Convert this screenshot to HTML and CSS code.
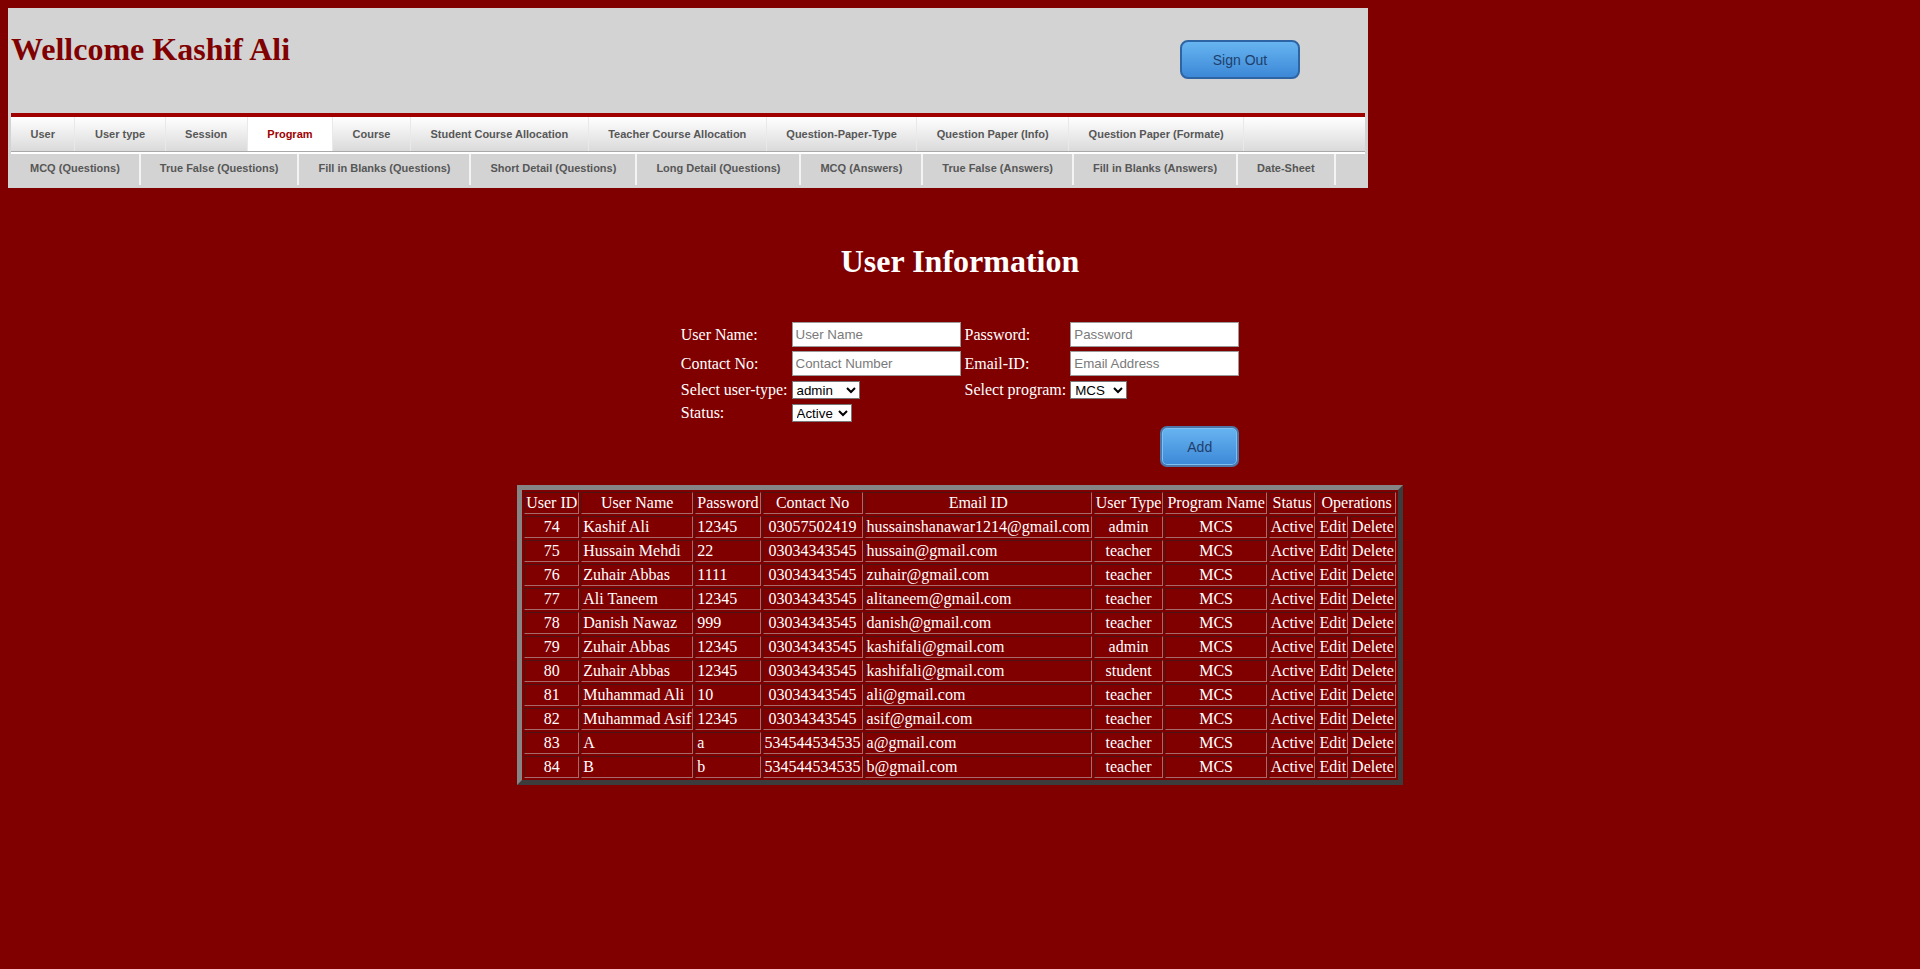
FILE: index.html
```html
<!DOCTYPE html>
<html>
<head>
<meta charset="utf-8">
<title>User Information</title>
<link rel="stylesheet" href="styles.css">
</head>
<body>
<div class="panel">
  <div class="top">
    <h1 class="welcome">Wellcome Kashif Ali</h1>
    <button class="btn signout">Sign Out</button>
  </div>
  <nav class="menu">
    <ul class="row1">
      <li>User</li>
      <li>User type</li>
      <li>Session</li>
      <li class="active">Program</li>
      <li>Course</li>
      <li>Student Course Allocation</li>
      <li>Teacher Course Allocation</li>
      <li>Question-Paper-Type</li>
      <li>Question Paper (Info)</li>
      <li>Question Paper (Formate)</li>
    </ul>
    <ul class="row2">
      <li>MCQ (Questions)</li>
      <li>True False (Questions)</li>
      <li>Fill in Blanks (Questions)</li>
      <li>Short Detail (Questions)</li>
      <li>Long Detail (Questions)</li>
      <li>MCQ (Answers)</li>
      <li>True False (Answers)</li>
      <li>Fill in Blanks (Answers)</li>
      <li>Date-Sheet</li>
    </ul>
  </nav>
</div>

<main class="content">
  <h1 class="title">User Information</h1>
  <table class="form">
    <tr>
      <td>User Name:</td>
      <td><input class="field" type="text" placeholder="User Name"></td>
      <td>Password:</td>
      <td><input class="field" type="text" placeholder="Password"></td>
    </tr>
    <tr>
      <td>Contact No:</td>
      <td><input class="field" type="text" placeholder="Contact Number"></td>
      <td>Email-ID:</td>
      <td><input class="field" type="text" placeholder="Email Address"></td>
    </tr>
    <tr>
      <td>Select user-type:</td>
      <td><select class="sel sel-type"><option>admin</option></select></td>
      <td>Select program:</td>
      <td><select class="sel sel-prog"><option>MCS</option></select></td>
    </tr>
    <tr>
      <td>Status:</td>
      <td><select class="sel sel-status"><option>Active</option></select></td>
      <td></td>
      <td></td>
    </tr>
    <tr>
      <td colspan="3"></td>
      <td><button class="btn add">Add</button></td>
    </tr>
  </table>

  <table class="data">
    <tr>
      <td class="c">User ID</td>
      <td class="c">User Name</td>
      <td class="c">Password</td>
      <td class="c">Contact No</td>
      <td class="c">Email ID</td>
      <td class="c">User Type</td>
      <td class="c">Program Name</td>
      <td class="c">Status</td>
      <td class="c" colspan="2">Operations</td>
    </tr>
    <tr><td class="c">74</td><td>Kashif Ali</td><td>12345</td><td class="c">03057502419</td><td>hussainshanawar1214@gmail.com</td><td class="c">admin</td><td class="c">MCS</td><td>Active</td><td>Edit</td><td>Delete</td></tr>
    <tr><td class="c">75</td><td>Hussain Mehdi</td><td>22</td><td class="c">03034343545</td><td>hussain@gmail.com</td><td class="c">teacher</td><td class="c">MCS</td><td>Active</td><td>Edit</td><td>Delete</td></tr>
    <tr><td class="c">76</td><td>Zuhair Abbas</td><td>1111</td><td class="c">03034343545</td><td>zuhair@gmail.com</td><td class="c">teacher</td><td class="c">MCS</td><td>Active</td><td>Edit</td><td>Delete</td></tr>
    <tr><td class="c">77</td><td>Ali Taneem</td><td>12345</td><td class="c">03034343545</td><td>alitaneem@gmail.com</td><td class="c">teacher</td><td class="c">MCS</td><td>Active</td><td>Edit</td><td>Delete</td></tr>
    <tr><td class="c">78</td><td>Danish Nawaz</td><td>999</td><td class="c">03034343545</td><td>danish@gmail.com</td><td class="c">teacher</td><td class="c">MCS</td><td>Active</td><td>Edit</td><td>Delete</td></tr>
    <tr><td class="c">79</td><td>Zuhair Abbas</td><td>12345</td><td class="c">03034343545</td><td>kashifali@gmail.com</td><td class="c">admin</td><td class="c">MCS</td><td>Active</td><td>Edit</td><td>Delete</td></tr>
    <tr><td class="c">80</td><td>Zuhair Abbas</td><td>12345</td><td class="c">03034343545</td><td>kashifali@gmail.com</td><td class="c">student</td><td class="c">MCS</td><td>Active</td><td>Edit</td><td>Delete</td></tr>
    <tr><td class="c">81</td><td>Muhammad Ali</td><td>10</td><td class="c">03034343545</td><td>ali@gmail.com</td><td class="c">teacher</td><td class="c">MCS</td><td>Active</td><td>Edit</td><td>Delete</td></tr>
    <tr><td class="c">82</td><td>Muhammad Asif</td><td>12345</td><td class="c">03034343545</td><td>asif@gmail.com</td><td class="c">teacher</td><td class="c">MCS</td><td>Active</td><td>Edit</td><td>Delete</td></tr>
    <tr><td class="c">83</td><td>A</td><td>a</td><td class="c">534544534535</td><td>a@gmail.com</td><td class="c">teacher</td><td class="c">MCS</td><td>Active</td><td>Edit</td><td>Delete</td></tr>
    <tr><td class="c">84</td><td>B</td><td>b</td><td class="c">534544534535</td><td>b@gmail.com</td><td class="c">teacher</td><td class="c">MCS</td><td>Active</td><td>Edit</td><td>Delete</td></tr>
  </table>
</main>
</body>
</html>
```

FILE: styles.css
```css
html, body {
  background: #800000;
}
body {
  margin: 8px;
  font-family: "Liberation Serif", "Times New Roman", serif;
  font-size: 16px;
  color: #ffffff;
}

/* ---------- header panel ---------- */
.panel {
  width: 1360px;
  box-sizing: border-box;
  padding: 3px;
  background: #d3d3d3;
}
.top {
  height: 102px;
  display: flex;
  justify-content: space-between;
  align-items: flex-start;
}
.welcome {
  margin: 20px 0 0 0;
  font-family: "Liberation Serif", "Times New Roman", serif;
  font-size: 32px;
  line-height: 37px;
  font-weight: bold;
  color: #800000;
}
.btn {
  font-family: "Liberation Sans", Arial, sans-serif;
  font-size: 14px;
  color: #1f406c;
  background: linear-gradient(#67b4f1, #3d88d7);
  border: 2px solid #2d64a4;
  border-radius: 8px;
  padding: 0;
  cursor: pointer;
}
.signout {
  width: 120px;
  height: 39px;
  margin: 29px 65px 0 0;
}

/* ---------- menu ---------- */
.menu ul {
  list-style: none;
  margin: 0;
  padding: 0;
  display: flex;
  font-family: "Liberation Sans", Arial, sans-serif;
  font-size: 11px;
  font-weight: bold;
  color: #575757;
}
.row1 {
  height: 34px;
  border-top: 4px solid #a00000;
  border-bottom: 1px solid #a9a9a9;
  background: linear-gradient(#ffffff, #dadada);
}
.row1 li {
  display: flex;
  align-items: center;
  padding: 0 19.5px;
  border-right: 1px solid #e9e9e9;
}
.row1 li.active {
  background: #ffffff;
  color: #a00000;
}
.row2 {
  height: 31px;
  border-top: 2px solid #ffffff;
  color: #5e5e5e;
}
.row2 li {
  display: flex;
  align-items: center;
  padding: 0 19px 3px 19px;
  border-right: 2px solid #f4f4f4;
}

/* ---------- main content ---------- */
.content {
  display: flex;
  flex-direction: column;
  align-items: center;
}
.title {
  margin: 55px 0 39px 0;
  font-size: 32px;
  line-height: 37px;
  font-weight: bold;
  color: #ffffff;
}

.form {
  border-spacing: 2px;
  color: #ffffff;
}
.form td {
  padding: 1px;
  line-height: 19px;
  white-space: nowrap;
  vertical-align: middle;
}
.field {
  display: block;
  box-sizing: border-box;
  width: 169px;
  height: 25px;
  margin: 0;
  padding: 1px 3px;
  border: 1px solid #9a9a9a;
  background: #ffffff;
  font-family: "Liberation Sans", Arial, sans-serif;
  font-size: 13.33px;
}
.field::placeholder {
  color: #7a7a7a;
}
.sel {
  display: block;
  box-sizing: border-box;
  height: 18px;
  margin: 0;
  padding: 0;
  border: 1px solid #777777;
  border-radius: 0;
  background: #ffffff;
  font-family: "Liberation Sans", Arial, sans-serif;
  font-size: 13.33px;
  color: #000000;
}
.sel-type { width: 68px; }
.sel-prog { width: 57px; }
.sel-status { width: 60px; }
.add {
  display: block;
  width: 79px;
  height: 41px;
  margin: 0 0 0 auto;
  border-radius: 7px;
  border: 2px solid #4d77a8;
  box-shadow: inset 0 0 0 1px #7fbff2;
}

/* ---------- data table ---------- */
.data {
  margin-top: 15px;
  border-collapse: separate;
  border-spacing: 2px;
  border-style: solid;
  border-width: 5px;
  border-color: #858585 #3c3c3c #3c3c3c #858585;
  color: #ffffff;
}
.data td {
  padding: 1px;
  line-height: 18px;
  white-space: nowrap;
  border: 1px solid;
  border-color: #4a1414 #a86a6a #a86a6a #4a1414;
  text-align: left;
}
.data td.c {
  text-align: center;
}
```
